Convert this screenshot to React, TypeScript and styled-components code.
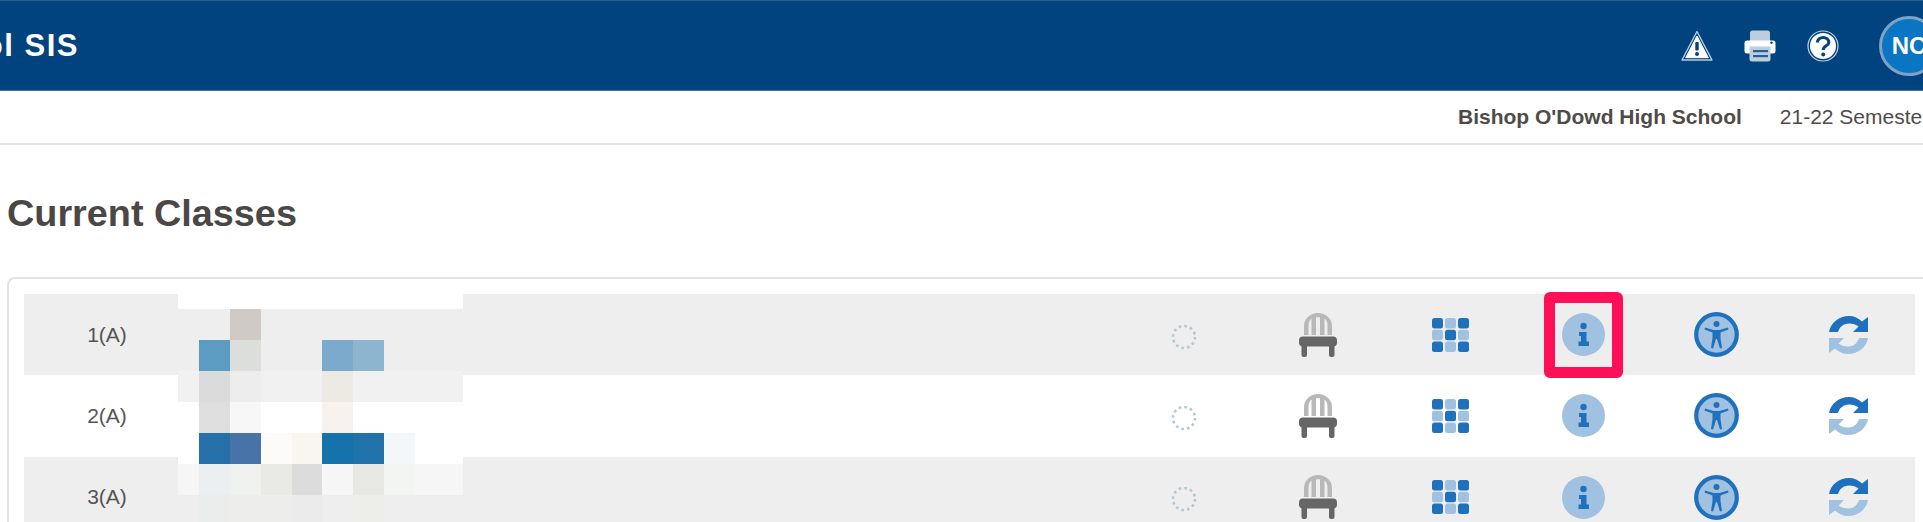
import { createGlobalStyle, styled } from "styled-components";

const GlobalStyle = createGlobalStyle`
  html, body {
    margin: 0;
    padding: 0;
    height: 522px;
    overflow: hidden;
    background: #fff;
    font-family: "Liberation Sans", Arial, sans-serif;
    color: #4f4b48;
  }
`;

const BLUE = "#1f70bd";
const LIGHT = "#a1c1e0";

// mosaic over the student name column, one row of cells per line
const cols = [178, 199, 230, 261, 292, 322, 353, 384, 415, 463];
const mosaic: [number, string, string[]][] = [
  [309, "#eeeeee", ["", "", "#cfcac5"]],
  [340, "#eeeeee", ["", "#5c9cc3", "#dcdedb", "", "", "#7baacd", "#8eb5d0"]],
  [371, "#f1f1f1", ["", "#dbdbdb", "#ededed", "", "", "#ede9e3"]],
  [402, "#ffffff", ["", "#dedede", "#f7f7f7", "", "", "#f7f2ee"]],
  [433, "#ffffff", ["", "#2570a9", "#4873a8", "#fcfbf9", "#f9f6f2", "#1572ab", "#2272aa", "#f4f7fa"]],
  [464, "#f6f6f6", ["", "#ebeff2", "#eff1ee", "#e9eae5", "#dcdcdc", "#f6f6f6", "#e7e8e3", "#f3f5f2"]],
  [495, "#eeeeee", ["", "#ebeded", "#ededeb", "#ededeb", "#ebebeb", "#eeeeee", "#ededea"]],
];

function Mosaic() {
  return (
    <MosaicSvg width="285" height="232" viewBox="178 294 285 232">
      <rect x="178" y="294" width="285" height="15" fill="#fff" />
      {mosaic.map(([y, base, cells]) => (
        <g key={y}>
          <rect x="178" y={y} width="285" height="31" fill={base} />
          {cells.map((c, i) =>
            c ? <rect key={i} x={cols[i]} y={y} width={cols[i + 1] - cols[i]} height="31" fill={c} /> : null
          )}
        </g>
      ))}
    </MosaicSvg>
  );
}

function WarningIcon() {
  return (
    <svg width="32" height="32" viewBox="0 0 32 32">
      <path d="M16 1.500 L31 30 H1 Z" fill="#00437f" stroke="#b9cbdc" strokeWidth="1.400" strokeLinejoin="round" />
      <path d="M16 6 L27.300 27.700 H4.700 Z" fill="#fff" stroke="#fff" strokeLinejoin="round" />
      <rect x="14.300" y="12" width="3.400" height="8.500" rx="1.200" fill="#00437f" />
      <circle cx="16" cy="24" r="2" fill="#00437f" />
    </svg>
  );
}

function PrinterIcon() {
  return (
    <svg width="32" height="32" viewBox="0 0 32 32">
      <path d="M6 3 a2.500 2.500 0 0 1 2.500-2.500 h15 a2.500 2.500 0 0 1 2.500 2.500 V12 H6 Z" fill="#bccddd" />
      <path d="M3 10.500 H29 a2.500 2.500 0 0 1 2.500 2.500 V21 a2.500 2.500 0 0 1-2.500 2.500 H3 a2.500 2.500 0 0 1-2.500-2.500 V13 a2.500 2.500 0 0 1 2.500-2.500 Z" fill="#fff" />
      <path d="M5.500 16.500 H26.500 V29 a2.500 2.500 0 0 1-2.500 2.500 H8 A2.500 2.500 0 0 1 5.500 29 Z" fill="#bccddd" />
      <circle cx="27.500" cy="12.800" r="1.200" fill="#00437f" />
      <rect x="9" y="20" width="15" height="2.200" fill="#2a5f94" />
      <rect x="9" y="25" width="15" height="2.200" fill="#2a5f94" />
    </svg>
  );
}

function HelpIcon() {
  return (
    <svg width="32" height="32" viewBox="0 0 32 32">
      <circle cx="16" cy="16" r="15" fill="none" stroke="#c5d4e3" strokeWidth="1.200" />
      <circle cx="16" cy="16" r="13" fill="#fff" />
      <path d="M10.500 12.500 C10.500 5.800 21.800 5.800 21.800 12.500 C21.800 16 16.200 15.800 16.200 20" fill="none" stroke="#00437f" strokeWidth="3" />
      <circle cx="16.200" cy="24.500" r="2" fill="#00437f" />
    </svg>
  );
}

function ChairIcon() {
  return (
    <svg width="38" height="44" viewBox="0 0 38 44">
      <path d="M5 22 V13 A14 13 0 0 1 33 13 V22 H28.500 V13 C28.500 9 27.500 7 25.500 5.500 V22 H21 V4.300 H17 V22 H12.500 V5.500 C10.500 7 9.500 9 9.500 13 V22 Z" fill="#b8b8b8" />
      <rect x="0" y="23.500" width="38" height="10" rx="4" fill="#666" />
      <path d="M2.500 30 H8 V42 a2 2 0 0 1-2 2 H4.500 a2 2 0 0 1-2-2 Z M30 30 H35.500 V42 a2 2 0 0 1-2 2 H32 a2 2 0 0 1-2-2 Z" fill="#666" />
    </svg>
  );
}

function GridIcon() {
  const cells = [BLUE, LIGHT, BLUE, LIGHT, BLUE, LIGHT, BLUE, LIGHT, BLUE];
  return (
    <svg width="37" height="34" viewBox="0 0 37 34">
      {cells.map((c, i) => (
        <rect key={i} x={(i % 3) * 13} y={Math.floor(i / 3) * 11.8} width="11" height="10.400" rx="2.500" fill={c} />
      ))}
    </svg>
  );
}

function InfoIcon() {
  return (
    <svg width="43" height="43" viewBox="0 0 43 43">
      <circle cx="21.500" cy="21.500" r="21.500" fill={LIGHT} />
      <circle cx="21.500" cy="13" r="3.200" fill={BLUE} />
      <path d="M17 19 H24.500 V28.500 H27 V33 H16.500 V28.500 H19 V23 H17 Z" fill={BLUE} />
    </svg>
  );
}

function AccessIcon() {
  return (
    <svg width="45" height="45" viewBox="0 0 45 45">
      <circle cx="22.500" cy="22.500" r="20.300" fill={LIGHT} stroke={BLUE} strokeWidth="4.200" />
      <circle cx="22.500" cy="12" r="3" fill={BLUE} />
      <path d="M11 15.500 L19.500 18 H25.500 L34 15.500 L34.500 17.500 L26.500 20.500 L26.500 26 L28 36 L26 36.500 L23 27 H22 L19 36.500 L17 36 L18.500 26 L18.500 20.500 L10.500 17.500 Z" fill={BLUE} />
    </svg>
  );
}

function RefreshIcon() {
  const half = "M0 16 C1.500 7 9.500 0 20 0 C25 0 29.500 2 33 5.500 L39 1 V16 H24 L29.500 10.500 C27 8.500 24 7.500 20 7.500 C14.500 7.500 10.500 11 9 16 Z";
  return (
    <svg width="40" height="38" viewBox="0 0 40 38">
      <path d={half} fill={BLUE} />
      <path d={half} fill={LIGHT} transform="rotate(180 19.500 19)" />
    </svg>
  );
}

function DottedIcon() {
  return (
    <DottedSvg width="26" height="26" viewBox="0 0 26 26">
      <circle cx="13" cy="13" r="11" fill="none" stroke="#b5c7d0" strokeWidth="2.600" strokeDasharray="2.600 3.160" />
    </DottedSvg>
  );
}

function ClassRow({ period, striped, highlight }: { period: string; striped: boolean; highlight?: boolean }) {
  return (
    <Row $striped={striped}>
      <Period>{period}</Period>
      <NameCell />
      <IconCell><DottedIcon /></IconCell>
      <IconCell><ChairIcon /></IconCell>
      <IconCell><GridIcon /></IconCell>
      <IconCell>
        <InfoIcon />
        {highlight && <Highlight />}
      </IconCell>
      <IconCell><AccessIcon /></IconCell>
      <IconCell><RefreshIcon /></IconCell>
    </Row>
  );
}

export default function App() {
  return (
    <Page>
      <GlobalStyle />
      <Header>
        <Brand><span>PowerSchool SIS</span></Brand>
        <HeaderActions>
          <WarningIcon />
          <PrinterIcon />
          <HelpIcon />
          <Avatar>NC</Avatar>
        </HeaderActions>
      </Header>
      <SubHeader>
        <School>Bishop O'Dowd High School</School>
        <Term>21-22 Semester 2</Term>
      </SubHeader>
      <Title>Current Classes</Title>
      <Panel>
        <Mosaic />
        <ClassRow period="1(A)" striped highlight />
        <ClassRow period="2(A)" striped={false} />
        <ClassRow period="3(A)" striped />
      </Panel>
    </Page>
  );
}

const Page = styled.div`
  width: 1923px;
  height: 522px;
  overflow: hidden;
`;

const Header = styled.header`
  display: flex;
  align-items: center;
  justify-content: space-between;
  box-sizing: border-box;
  height: 91px;
  background: #00437f;
  border-top: 1px solid #2a5f86;
  border-bottom: 1px solid #3f74a3;
`;

const Brand = styled.div`
  display: flex;
  justify-content: flex-end;
  width: 79px;
  overflow: hidden;
  flex: none;
  white-space: nowrap;
  color: #fff;
  font-size: 31px;
  font-weight: 700;
  letter-spacing: 1.5px;
`;

const HeaderActions = styled.div`
  display: flex;
  align-items: center;
  gap: 31px;
  margin-right: -16px;
`;

const Avatar = styled.div`
  display: flex;
  align-items: center;
  justify-content: center;
  box-sizing: border-box;
  width: 60px;
  height: 60px;
  margin-left: 9px;
  border-radius: 50%;
  border: 3px solid #7fa2c4;
  background: #0a75c2;
  color: #fff;
  font-size: 24px;
  font-weight: 700;
`;

const SubHeader = styled.div`
  display: flex;
  align-items: center;
  gap: 38px;
  height: 52px;
  padding-left: 1458px;
  overflow: hidden;
  border-bottom: 2px solid #e4e4e4;
  font-size: 21px;
  white-space: nowrap;
`;

const School = styled.span`
  font-weight: 700;
`;

const Term = styled.span``;

const Title = styled.h1`
  margin: 0;
  padding: 47px 0 0 7px;
  height: 85px;
  font-size: 37.8px;
  line-height: 42px;
  font-weight: 700;
  color: #4a4745;
`;

const Panel = styled.section`
  position: relative;
  box-sizing: border-box;
  width: 1916px;
  margin-left: 7px;
  padding: 15px 0 0 15px;
  border: 2px solid #e3e3e3;
  border-right: 0;
  border-radius: 8px 0 0 0;
`;

const MosaicSvg = styled.svg`
  position: absolute;
  left: 169px;
  top: 15px;
  z-index: 1;
`;

const Row = styled.div<{ $striped: boolean }>`
  display: flex;
  align-items: center;
  width: 1891px;
  height: 81.3px;
  background: ${(p) => (p.$striped ? "#eeeeee" : "#ffffff")};
`;

const Period = styled.div`
  width: 166px;
  flex: none;
  text-align: center;
  font-size: 21px;
  color: #555;
`;

const NameCell = styled.div`
  flex: 1;
`;

const IconCell = styled.div`
  position: relative;
  display: flex;
  align-items: center;
  justify-content: center;
  width: 132.6px;
  height: 100%;
  flex: none;
`;

const DottedSvg = styled.svg`
  margin: 4px 3px 0 0;
`;

const Highlight = styled.div`
  position: absolute;
  left: 27px;
  top: -2px;
  box-sizing: border-box;
  width: 79px;
  height: 86px;
  border: 11px solid #fe0f58;
  border-radius: 6px;
`;
